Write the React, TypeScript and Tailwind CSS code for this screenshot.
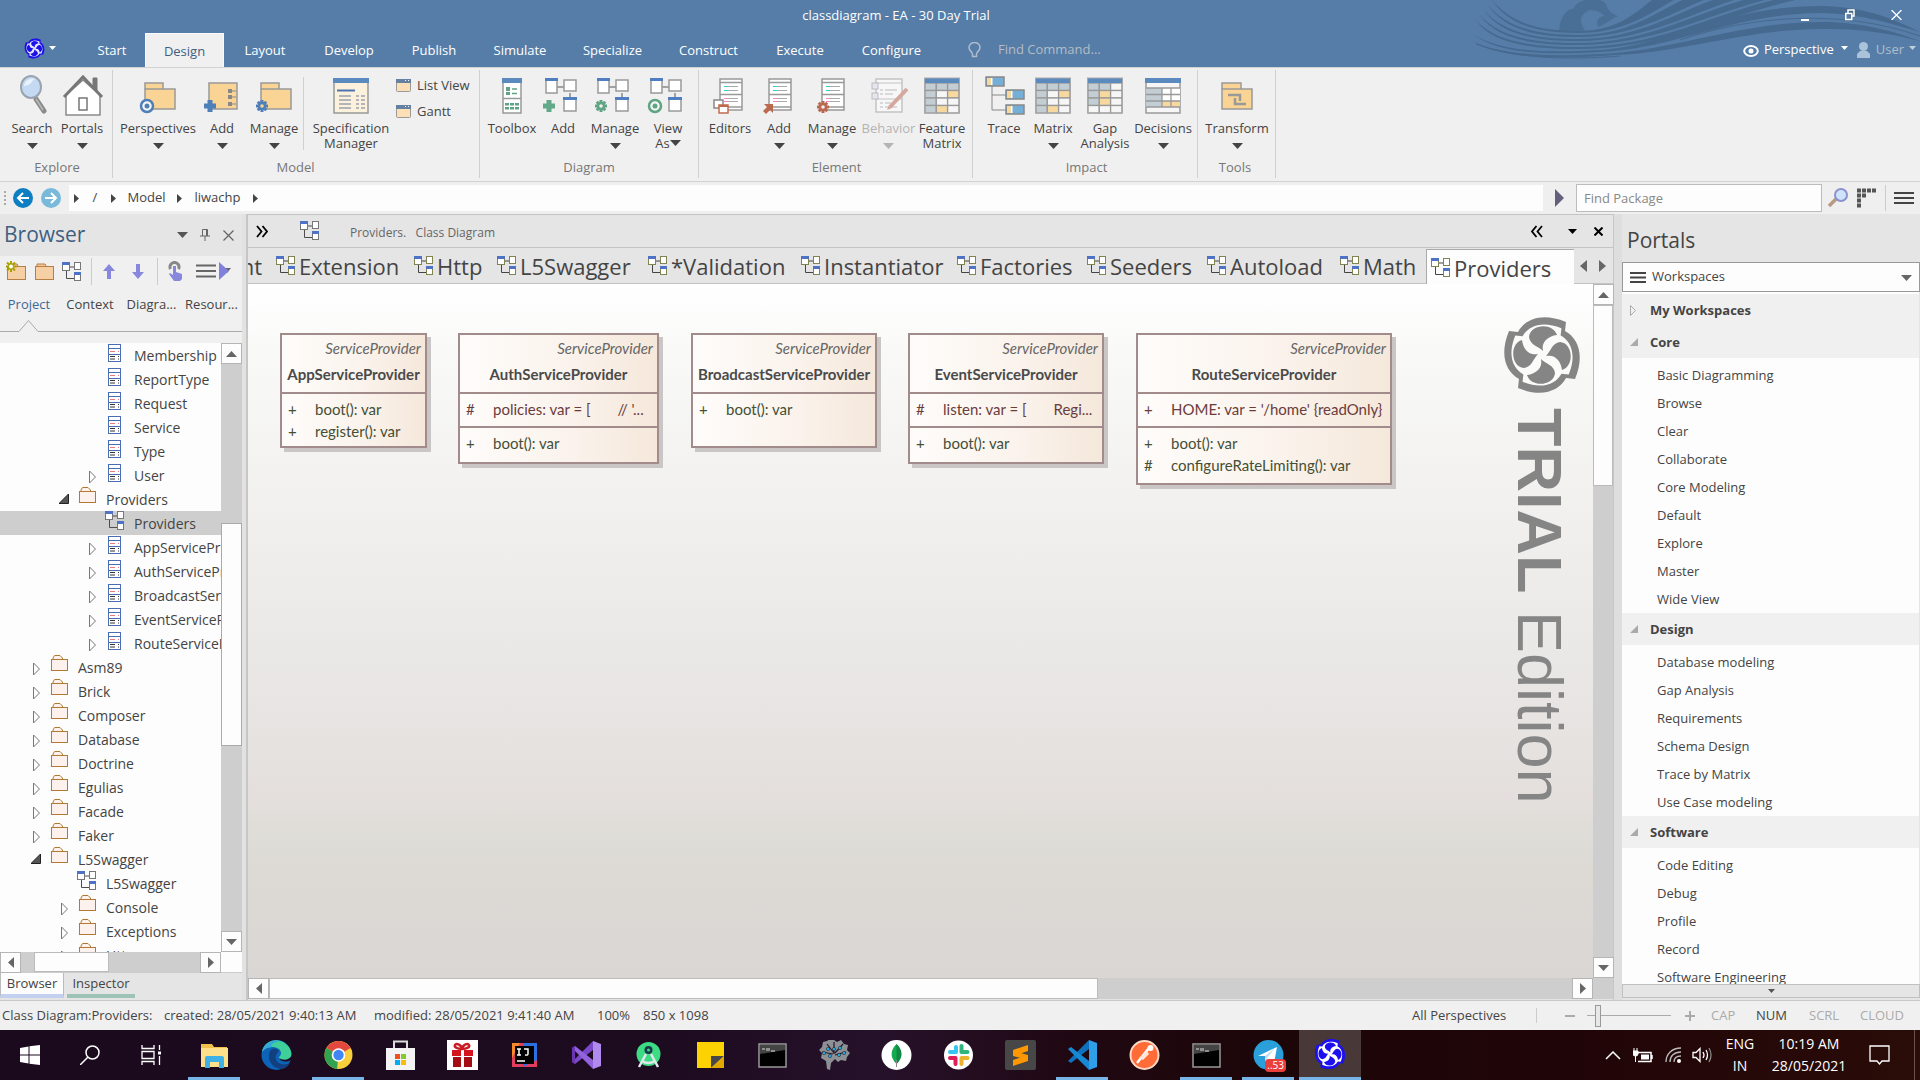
import React from "react";

const UI = "font-['Open_Sans','Noto_Sans',sans-serif]";

/* ---------- Logo ---------- */

function EaLogo({ size, color, bg }: { size: number; color: string; bg: string }) {
  const ring =
    "M24 -33 L23 -24 C36 -17 43 0 33 24 L24 23 C17 36 0 43 -24 33 L-23 24 C-36 17 -43 0 -33 -24 L-24 -23 C-17 -36 0 -43 24 -33Z";
  const blob = "M1 -4 C-4 -9 -12 -10 -13 -18 C-12 -31 11 -33 15 -20 C6 -19 -1 -13 1 -4Z";
  return (
    <svg width={size} height={size} viewBox="-40 -40 80 80" aria-hidden="true">
      <path d={ring} fill={color} />
      <path d={ring} fill={bg} transform="scale(.81)" />
      {[0, 90, 180, 270].map((a) => (
        <path key={a} d={blob} fill={color} transform={`rotate(${a})`} />
      ))}
    </svg>
  );
}

/* ---------- Small shapes ---------- */

function Tri({ dir, w = 10, h = 6, color = "#444" }: { dir: "up" | "down" | "left" | "right"; w?: number; h?: number; color?: string }) {
  const pts = {
    up: `0,${h} ${w},${h} ${w / 2},0`,
    down: `0,0 ${w},0 ${w / 2},${h}`,
    left: `${w},0 ${w},${h} 0,${h / 2}`,
    right: `0,0 0,${h} ${w},${h / 2}`,
  }[dir];
  return (
    <svg width={w} height={h} viewBox={`0 0 ${w} ${h}`} className="shrink-0" aria-hidden="true">
      <polygon points={pts} fill={color} />
    </svg>
  );
}

function DiagramIcon({ line = "#777", dark = "#4d4d4d" }: { line?: string; dark?: string }) {
  return (
    <svg width="20" height="19" viewBox="0 0 20 19" className="shrink-0" aria-hidden="true">
      <path d="M8 5h4M4.500 9v7.500h8" stroke={dark} fill="none" />
      <rect x=".5" y=".5" width="7" height="8" fill="#fff" stroke={line} />
      <rect x="0" y="0" width="8" height="3" fill="#4f73c4" />
      <rect x="12.500" y=".5" width="6" height="7" fill="#fff" stroke={line} />
      <rect x="12.500" y="10.500" width="6" height="8" fill="#fff" stroke={line} />
      <rect x="12" y="10" width="7" height="3" fill="#4f73c4" />
    </svg>
  );
}

function ClassIcon() {
  return (
    <svg width="14" height="18" viewBox="0 0 14 18" className="shrink-0" aria-hidden="true">
      <rect x=".5" y=".5" width="12" height="17" fill="#fff" stroke="#4a6db5" />
      <path d="M0 4.500h13M0 10.500h13" stroke="#4a6db5" />
      <path d="M2 7.500h5M10 7.500h1" stroke="#e77" />
      <path d="M2 12.500h5M10 12.500h1M2 15h5M10 15h1" stroke="#333" />
    </svg>
  );
}

function FolderIcon() {
  return (
    <svg width="18" height="16" viewBox="0 0 18 16" className="shrink-0" aria-hidden="true">
      <path d="M2 4.500V3l1.500-2.500H9L11.500 3v1.500" fill="#fdf1ee" stroke="#b07a35" />
      <rect x=".5" y="4.500" width="16" height="11" fill="#fdf1ee" stroke="#b07a35" />
    </svg>
  );
}

function FilledFolder({ star = false }: { star?: boolean }) {
  return (
    <svg width="21" height="20" viewBox="0 0 21 20" aria-hidden="true">
      <path d="M3 5V3h8l1 2" fill="#f6c99a" stroke="#b57f45" />
      <rect x="1.500" y="5.500" width="18" height="13" fill="#f6cfa4" stroke="#b57f45" />
      {star && (
        <g>
          <path d="M5 0v11M-.5 5.500h11M1 1.500l8 8M9 1.500l-8 8" stroke="#a9a000" strokeWidth="2" />
          <circle cx="5" cy="5.500" r="2" fill="#fff" />
        </g>
      )}
    </svg>
  );
}

/* ---------- Ribbon icons ---------- */

const G = "#999";
const gear = (cx: number, cy: number, color: string, hole = "#f0f0f0") => (
  <g>
    {[0, 45, 90, 135].map((a) => (
      <rect key={a} x={cx - 1.5} y={cy - 6} width="3" height="12" fill={color} transform={`rotate(${a} ${cx} ${cy})`} />
    ))}
    <circle cx={cx} cy={cy} r="4" fill={color} />
    <circle cx={cx} cy={cy} r="1.800" fill={hole} />
  </g>
);
const plus = (cx: number, cy: number, color: string) => (
  <path d={`M${cx - 6} ${cy}h12M${cx} ${cy - 6}v12`} stroke={color} strokeWidth="5" />
);
const eye = (cx: number, cy: number, color: string) => (
  <g>
    <circle cx={cx} cy={cy} r="6" fill="#f6f6f6" stroke={color} strokeWidth="2.500" />
    <circle cx={cx} cy={cy} r="2.500" fill={color} />
  </g>
);
const folderShape = (
  <g stroke={G} strokeWidth="1.500" fill="#f9d494">
    <path d="M6 12V6h18v6" />
    <rect x="6" y="12" width="30" height="20" />
  </g>
);
const diagShape = (
  <g>
    <path d="M13 10h8M26 16v8" stroke="#888" strokeWidth="1.500" />
    <rect x="2" y="2" width="11" height="14" fill="#fff" stroke={G} strokeWidth="1.500" />
    <rect x="1" y="1" width="13" height="3" fill="#4f7fc0" />
    <rect x="20" y="3" width="12" height="11" fill="#fff" stroke={G} strokeWidth="1.500" />
    <rect x="20" y="21" width="12" height="13" fill="#fff" stroke={G} strokeWidth="1.500" />
    <rect x="19" y="20" width="14" height="3" fill="#4f7fc0" />
  </g>
);
const docShape = (
  <g>
    <rect x="9" y="2" width="22" height="31" fill="#fff" stroke={G} strokeWidth="1.500" />
    <path d="M9 5.500h22M9 17.500h22M9 30h22" stroke={G} strokeWidth="1.500" />
    <path d="M13 9.500h14M13 13.500h14M13 21.500h14M13 24.500h14" stroke="#aaa" />
    <path d="M13 9.500h4M13 13.500h4" stroke="#3cc" />
    <path d="M13 21.500h4M13 24.500h4" stroke="#e8c" />
  </g>
);
function grid(cells: string[]) {
  const fills: Record<string, string> = { b: "#c3ced4", y: "#f7d9a0", w: "#f6f6f6" };
  return (
    <g>
      {cells.map((row, r) =>
        row.split("").map((c, k) => (
          <rect key={`${r}${k}`} x={2 + k * 11.3} y={6 + r * 7.5} width="11.300" height="7.500" fill={fills[c]} stroke={G} strokeWidth="1.300" />
        )),
      )}
      <rect x="1.500" y="1" width="35" height="5" fill="#5b8abf" />
      <rect x="1.500" y="1" width="35" height="35" fill="none" stroke="#aaa" />
    </g>
  );
}
const traceBox = (x: number, y: number) => (
  <g>
    <rect x={x} y={y} width="18" height="9" fill="#75aed6" stroke="#888" strokeWidth="1.500" />
    <rect x={x + 1} y={y + 1} width="4" height="7" fill="#f7d9a0" />
    <rect x={x + 5} y={y + 1} width="1.500" height="7" fill="#fff" />
  </g>
);

const ribbonIcons: Record<string, React.ReactNode> = {
  search: (
    <g>
      <path d="M23 22l8 12" stroke="#8a8a8a" strokeWidth="5" strokeLinecap="round" />
      <path d="M23 22l7 11" stroke="#bbb" strokeWidth="1.500" />
      <ellipse cx="18" cy="10" rx="10" ry="11" fill="#c4daf2" stroke="#9aa3b0" strokeWidth="2" />
      <path d="M11 9c1-6 6-8 11-7-4 2-3 6-11 7z" fill="#eaf3fc" />
    </g>
  ),
  portals: (
    <g>
      <path d="M30 11V1h4v14" fill="#777" stroke="#777" />
      <path d="M3 18v20h34V18L20 3z" fill="#fff" stroke="#8a8a8a" strokeWidth="1.500" />
      <path d="M1 20L20 0 39 20" fill="none" stroke="#777" strokeWidth="3" />
      <rect x="16" y="21" width="8" height="12" fill="#fff" stroke="#777" strokeWidth="1.500" />
    </g>
  ),
  perspectives: <g>{folderShape}{eye(8, 29, "#4f7fb8")}</g>,
  addModel: (
    <g>
      <rect x="6" y="6" width="28" height="26" fill="#f9d494" stroke={G} strokeWidth="1.500" />
      <path d="M27 14h6M27 20h6M27 27h6" stroke="#888" />
      <path d="M27 12v4M27 18v4M27 25v4" stroke="#888" strokeWidth="4" />
      {plus(7, 29, "#4f7fb8")}
    </g>
  ),
  manageModel: <g>{folderShape}{gear(7, 29, "#4f7fb8", "#f9d494")}</g>,
  spec: (
    <g>
      <rect x="2" y="2" width="34" height="34" fill="#fcf1dc" stroke={G} strokeWidth="1.500" />
      <rect x="1" y="1" width="36" height="5" fill="#5b8abf" />
      <path d="M5 13.500h18" stroke="#4f73b0" strokeWidth="2" />
      <path d="M7 19h12M7 23h12M7 27h12M7 31h12M24 19h3M29 19h4M24 23h3M29 23h4M24 27h3M29 27h4M24 31h3M29 31h4" stroke="#6a7a95" />
    </g>
  ),
  toolbox: (
    <g>
      <rect x="10" y="2" width="18" height="34" fill="#fff" stroke={G} strokeWidth="1.500" />
      <rect x="9" y="1" width="20" height="5" fill="#5b8abf" />
      <path d="M10 21.500h18" stroke={G} strokeWidth="1.500" />
      <path d="M13 10h4v4h-4zM13 15h4v3h-4zM12 26h4v2.500h-4zM17 26h4v2.500h-4zM22 26h4v2.500h-4zM12 30h4v2.500h-4zM17 30h4v2.500h-4zM22 30h4v2.500h-4z" fill="#5fa583" />
      <path d="M19 12h5M19 16.500h5" stroke="#5fa583" strokeWidth="1.500" />
    </g>
  ),
  addDiagram: <g>{diagShape}{plus(5, 29, "#62a98a")}</g>,
  manageDiagram: <g>{diagShape}{gear(5, 29, "#5fa583")}</g>,
  viewAs: <g>{diagShape}{eye(6, 29, "#5fa583")}</g>,
  editors: (
    <g>
      {docShape}
      <rect x="3" y="23" width="9" height="8" fill="#fff" stroke="#888" strokeWidth="1.500" />
      <rect x="8" y="28" width="9" height="8" fill="#fff" stroke="#c2694c" strokeWidth="1.500" />
      <path d="M8 29h9" stroke="#c2694c" strokeWidth="2" />
    </g>
  ),
  addElement: <g>{docShape}<path d="M13 27v9l-3-3-4 4-3-3 4-4-3-3z" fill="#bb6a50" /></g>,
  manageElement: <g>{docShape}{gear(10, 30, "#b9694f")}</g>,
  behavior: (
    <g opacity=".5">
      <rect x="6" y="2" width="26" height="33" fill="#fff" stroke={G} strokeWidth="1.500" />
      <path d="M6 6h26M6 22h26" stroke={G} />
      <path d="M10 13h3M15 13h12M10 17h3M15 17h8M10 26h3M15 26h6M10 30h3M15 30h12" stroke="#888" />
      <rect x="2" y="6" width="6" height="6" fill="#dde" stroke="#889" />
      <rect x="2" y="16" width="6" height="6" fill="#dde" stroke="#889" />
      <path d="M20 30L37 12" stroke="#b9634d" strokeWidth="4" />
      <path d="M17 33l2-5 3 3z" fill="#b9634d" />
    </g>
  ),
  featureMatrix: grid(["bbb", "bwy", "bww", "byw"]),
  matrix: grid(["bbb", "bwy", "bww", "byw"]),
  gap: grid(["bbw", "byw", "byw", "www"]),
  decisions: (
    <g>
      <rect x="2" y="2" width="34" height="34" fill="#f6f6f6" stroke={G} strokeWidth="1.500" />
      <rect x="1" y="1" width="36" height="5" fill="#5b8abf" />
      <rect x="2" y="11" width="16" height="19" fill="#c3ced4" />
      <rect x="18" y="11" width="18" height="13" fill="#fff" />
      <rect x="18" y="24" width="18" height="6" fill="#f7d9a0" />
      <path d="M2 11h34M2 17.500h34M2 24h34M2 30h34M18 11v19M27 11v19" stroke={G} strokeWidth="1.300" />
    </g>
  ),
  trace: (
    <g>
      <path d="M7 9v24h14M7 18h14" fill="none" stroke="#888" />
      {traceBox(1, 0)}
      {traceBox(21, 13)}
      {traceBox(21, 28)}
    </g>
  ),
  transform: (
    <g>
      <path d="M4 12V6h19v6" fill="#f9d494" stroke={G} strokeWidth="1.500" />
      <rect x="4" y="12" width="30" height="20" fill="#f9d494" stroke={G} strokeWidth="1.500" />
      <path d="M10 18h12v6M28 27H17v-6" fill="none" stroke="#999" strokeWidth="2.500" />
    </g>
  ),
};

type RB = { icon: string; label: string[]; w: string; arrow?: boolean; inlineArrow?: boolean; off?: boolean };

function RibbonButton({ b }: { b: RB }) {
  return (
    <button className={`${b.w} flex shrink-0 flex-col items-center text-[13px] leading-[15px] ${b.off ? "text-[#b4b4b4]" : "text-[#444]"}`}>
      <span className="flex h-[53px] items-center pl-[2px] pt-1">
        <svg width="40" height="40" viewBox="0 0 40 40" aria-hidden="true" className="overflow-visible">
          {ribbonIcons[b.icon]}
        </svg>
      </span>
      <span className="whitespace-nowrap">{b.label[0]}</span>
      {b.label[1] && (
        <span className="flex whitespace-nowrap">
          {b.label[1]}
          {b.inlineArrow && (
            <span className="pt-1">
              <Tri dir="down" w={11} h={6} />
            </span>
          )}
        </span>
      )}
      {b.arrow && (
        <span className="mt-[7px]">
          <Tri dir="down" w={11} h={6} color={b.off ? "#b4b4b4" : "#444"} />
        </span>
      )}
    </button>
  );
}

function Group({ label, cls, items, children }: { label: string; cls: string; items: RB[]; children?: React.ReactNode }) {
  return (
    <section className={`${cls} relative flex shrink-0 flex-col`}>
      <div className="flex h-[91px]">
        {items.map((b, i) => (
          <RibbonButton key={i} b={b} />
        ))}
        {children}
      </div>
      <h2 className="pr-[6px] text-center text-[13px] leading-4 text-[#777]">{label}</h2>
      <div className="absolute right-0 top-[2px] h-[108px] w-px bg-[#d0d0d0]" />
    </section>
  );
}

function WindowIcon() {
  return (
    <svg width="15" height="13" viewBox="0 0 15 13" aria-hidden="true">
      <rect x=".5" y=".5" width="14" height="12" rx="1" fill="#fcdfb6" stroke="#999" />
      <rect x="0" y="0" width="15" height="4" fill="#6580a0" />
      <path d="M9 1.500h1M12 1.500h1" stroke="#fff" />
    </svg>
  );
}

function Ribbon() {
  return (
    <div className="flex h-[115px] shrink-0 border-y border-[#d2d2d2] bg-[#f0f0f0]">
      <Group
        label="Explore"
        cls="w-[113px] pl-[7px]"
        items={[
          { icon: "search", label: ["Search"], w: "w-[50px]", arrow: true },
          { icon: "portals", label: ["Portals"], w: "w-[50px]", arrow: true },
        ]}
      />
      <Group
        label="Model"
        cls="w-[367px] pl-1"
        items={[
          { icon: "perspectives", label: ["Perspectives"], w: "w-[82px]", arrow: true },
          { icon: "addModel", label: ["Add"], w: "w-[46px]", arrow: true },
          { icon: "manageModel", label: ["Manage"], w: "w-[58px]", arrow: true },
        ]}
      >
        <div className="mt-[9px] mr-1 h-[73px] w-px shrink-0 bg-[#d0d0d0]" />
        <RibbonButton b={{ icon: "spec", label: ["Specification", "Manager"], w: "w-[86px]" }} />
        <div className="flex flex-col gap-[10px] pl-[2px] pt-[9px] text-[13px] leading-4 text-[#444]">
          <button className="flex items-center gap-[6px] whitespace-nowrap"><WindowIcon />List View</button>
          <button className="flex items-center gap-[6px]"><WindowIcon />Gantt</button>
        </div>
      </Group>
      <Group
        label="Diagram"
        cls="w-[219px] pl-[5px]"
        items={[
          { icon: "toolbox", label: ["Toolbox"], w: "w-[54px]" },
          { icon: "addDiagram", label: ["Add"], w: "w-[48px]" },
          { icon: "manageDiagram", label: ["Manage"], w: "w-[56px]", arrow: true },
          { icon: "viewAs", label: ["View", "As"], w: "w-[50px]", inlineArrow: true },
        ]}
      />
      <Group
        label="Element"
        cls="w-[274px] pl-[7px]"
        items={[
          { icon: "editors", label: ["Editors"], w: "w-[48px]" },
          { icon: "addElement", label: ["Add"], w: "w-[50px]", arrow: true },
          { icon: "manageElement", label: ["Manage"], w: "w-[56px]", arrow: true },
          { icon: "behavior", label: ["Behavior"], w: "w-[57px]", arrow: true, off: true },
          { icon: "featureMatrix", label: ["Feature", "Matrix"], w: "w-[50px]" },
        ]}
      />
      <Group
        label="Impact"
        cls="w-[225px] pl-2"
        items={[
          { icon: "trace", label: ["Trace"], w: "w-[46px]" },
          { icon: "matrix", label: ["Matrix"], w: "w-[52px]", arrow: true },
          { icon: "gap", label: ["Gap", "Analysis"], w: "w-[52px]" },
          { icon: "decisions", label: ["Decisions"], w: "w-[64px]", arrow: true },
        ]}
      />
      <Group label="Tools" cls="w-[78px] pl-[2px]" items={[{ icon: "transform", label: ["Transform"], w: "w-[74px]", arrow: true }]} />
    </div>
  );
}

/* ---------- Title bar ---------- */

const menu: [string, string][] = [
  ["Start", "w-[66px]"],
  ["Design", "w-[79px]"],
  ["Layout", "w-[82px]"],
  ["Develop", "w-[86px]"],
  ["Publish", "w-[84px]"],
  ["Simulate", "w-[88px]"],
  ["Specialize", "w-[97px]"],
  ["Construct", "w-[95px]"],
  ["Execute", "w-[88px]"],
  ["Configure", "w-[95px]"],
];

function Swirl() {
  /* Ribbons that leave the left edge as thin lines and widen towards the upper right. */
  const ribbons = [0, 1, 2, 3, 4].map((i) => {
    const x = 52 - i * 4;
    const y = i * 5;
    const low = 31 + i * 4;
    const end = 215 + i * 32;
    return `M${x} ${y}C${x + 20} ${y + 24} 100 ${low} 138 ${low}C${180 + i * 10} ${low} ${195 + i * 20} 12 ${end} -2H${end + 22}C${212 + i * 20} 12 ${186 + i * 10} ${low + 2} 138 ${low + 2}C100 ${low + 2} ${x + 17} ${y + 26} ${x} ${y}Z`;
  });
  return (
    <svg width="450" height="60" viewBox="30 0 450 60" className="absolute right-0 top-0" aria-hidden="true">
      <g fill="#46698f">
        <path d="M119 31C120 16 127 9 133 9C139 -3 160 -4 166 4C168 12 173 14 178 16C172 19 165 24 158 27C155 20 160 16 165 16C158 10 150 8 146 12C139 16 140 25 145 30C138 32 128 32 119 31Z" opacity=".7" />
        {ribbons.map((d) => (
          <path key={d} d={d} />
        ))}
        <path d="M33 34C60 52 105 53 160 50C230 45 285 5 385 6C430 8 455 20 480 32C455 25 425 14 380 13C290 14 235 49 160 52C105 55 58 54 33 34Z" />
        <path d="M32 41C65 57 120 57 175 53C245 47 310 20 390 22C430 24 455 32 480 41C455 35 430 29 385 29C310 28 245 52 175 55C120 59 63 60 32 41Z" />
      </g>
      <path d="M36 44C75 59 130 60 180 56M240 40C310 16 400 8 480 36" fill="none" stroke="#46698f" />
    </svg>
  );
}

function TitleBar() {
  return (
    <header className="relative flex h-[67px] shrink-0 flex-col bg-[#567da7] text-[13px] text-white">
      <Swirl />
      <div className="relative flex h-[33px] items-center justify-end">
        <h1 className="absolute inset-x-0 top-0 pr-[128px] text-center leading-[30px]">classdiagram - EA - 30 Day Trial</h1>
        <div className="relative flex items-center gap-[36px] pb-1 pr-[18px]">
          <button aria-label="Minimize" className="flex h-3 w-2 items-end"><span className="h-[2px] w-2 bg-white" /></button>
          <button aria-label="Restore">
            <svg width="10" height="12" viewBox="0 0 10 12"><path d="M3 4V1h6v6H7M.75 4.500h6v6h-6z" fill="none" stroke="#fff" strokeWidth="1.500" /></svg>
          </button>
          <button aria-label="Close">
            <svg width="11" height="10" viewBox="0 0 11 10"><path d="M.5 0l10 10M10.500 0l-10 10" stroke="#fff" strokeWidth="1.300" /></svg>
          </button>
        </div>
      </div>
      <nav className="relative flex h-[34px] items-center">
        <button aria-label="Application menu" className="flex w-[79px] items-center gap-1 pb-1 pl-6">
          <EaLogo size={21} color="#1c10e8" bg="#e4e6ff" />
          <Tri dir="down" w={7} h={4} color="#fff" />
        </button>
        {menu.map(([m, w]) => (
          <button
            key={m}
            className={`${w} h-full shrink-0 ${m === "Design" ? "border border-b-0 border-[#fafafa] bg-[#f0f0f0] leading-[32px] text-[#3f5f80]" : "leading-[34px]"}`}
          >
            {m}
          </button>
        ))}
        <label htmlFor="find-command" className="pl-[29px] pr-[17px]">
          <svg width="13" height="17" viewBox="0 0 13 17" role="img" aria-label="Find Command">
            <path d="M4.500 12C4 9 1 9 1 5.500a5.500 5 0 0 1 11 0C12 9 9 9 8.500 12v2.500h-4z" fill="none" stroke="#aebccc" strokeWidth="1.500" />
          </svg>
        </label>
        <input id="find-command" placeholder="Find Command..." className="w-40 bg-transparent placeholder:text-[#b4bcc6]" />
        <div className="flex flex-1 items-center justify-end">
          <button className="flex items-center">
            <svg width="16" height="12" viewBox="0 0 16 12" className="mr-[5px] mt-[2px]" aria-hidden="true">
              <ellipse cx="8" cy="6" rx="6.800" ry="5" fill="none" stroke="#fff" strokeWidth="2" />
              <circle cx="8" cy="6" r="2.500" fill="#fff" />
            </svg>
            Perspective
            <span className="ml-[7px] pb-1"><Tri dir="down" w={7} h={4} color="#fff" /></span>
          </button>
          <button className="ml-[9px] mr-1 flex items-center text-[#aebdcd]">
            <svg width="13" height="16" viewBox="0 0 13 16" className="mr-[6px]" aria-hidden="true">
              <circle cx="6.500" cy="4.500" r="4.500" fill="#aac2da" />
              <path d="M0 16v-4l3-3h7l3 3v4z" fill="#aac2da" />
            </svg>
            User
            <span className="ml-[5px] pb-1"><Tri dir="down" w={7} h={4} color="#c3cfdc" /></span>
          </button>
        </div>
      </nav>
    </header>
  );
}

/* ---------- Address bar ---------- */

function RoundArrow({ color, flip, label }: { color: string; flip?: boolean; label: string }) {
  return (
    <button aria-label={label}>
      <svg width="20" height="20" viewBox="0 0 20 20">
        <circle cx="10" cy="10" r="10" fill={color} />
        <path d={flip ? "M4 10h11M10 5l5 5-5 5" : "M16 10H5M10 5l-5 5 5 5"} fill="none" stroke="#fff" strokeWidth="2" />
      </svg>
    </button>
  );
}

function AddressBar() {
  return (
    <div className="flex h-8 shrink-0 items-center bg-[#efefef] text-[13px] text-[#444]">
      <div className="ml-1 mr-[7px] h-[14px] w-px border-l-2 border-dotted border-[#aaa]" />
      <RoundArrow color="#0f7fc4" label="Back" />
      <span className="w-2" />
      <RoundArrow color="#79b9da" flip label="Forward" />
      <nav className="ml-2 flex h-[26px] flex-1 items-center bg-[#fdfdfd] pl-[5px]">
        <Tri dir="right" w={5} h={9} />
        <a href="#root" className="w-8 text-center">/</a>
        <Tri dir="right" w={5} h={9} />
        <a href="#model" className="w-[61px] text-center">Model</a>
        <Tri dir="right" w={5} h={9} />
        <a href="#liwachp" className="w-[71px] text-center">liwachp</a>
        <Tri dir="right" w={5} h={9} />
      </nav>
      <button aria-label="Go" className="px-3"><Tri dir="right" w={9} h={18} color="#64607c" /></button>
      <input aria-label="Find Package" placeholder="Find Package" className="h-7 w-[246px] border border-[#bcbcbc] bg-[#fdfdfd] px-[7px] placeholder:text-[#888]" />
      <button aria-label="Search package" className="ml-[6px]">
        <svg width="20" height="20" viewBox="0 0 20 20">
          <path d="M1 18l7-7" stroke="#b79a80" strokeWidth="3.500" />
          <circle cx="13" cy="7" r="6" fill="#cfe4fb" stroke="#8b90cf" strokeWidth="2" />
        </svg>
      </button>
      <button aria-label="Layout" className="ml-[9px]">
        <svg width="20" height="20" viewBox="0 0 20 20">
          <path d="M0 2.500h20" stroke="#555" strokeWidth="4" strokeDasharray="4 1" />
          <path d="M0 7.500h10M0 12.500h4M0 17.500h4" stroke="#555" strokeWidth="4" strokeDasharray="4 1" />
        </svg>
      </button>
      <div className="mx-2 h-[26px] w-px bg-[#ccc]" />
      <button aria-label="Menu" className="mr-[6px] flex w-5 flex-col gap-[3px]">
        <span className="h-[2px] bg-[#444]" />
        <span className="h-[2px] bg-[#444]" />
        <span className="h-[2px] bg-[#444]" />
      </button>
    </div>
  );
}

/* ---------- Scroll bars ---------- */

function ScrollBtn({ dir }: { dir: "up" | "down" | "left" | "right" }) {
  const v = dir === "up" || dir === "down";
  return (
    <button aria-label={`Scroll ${dir}`} className="flex h-[21px] w-[21px] shrink-0 items-center justify-center border border-[#b5b5b5] bg-[#fdfdfd]">
      <Tri dir={dir} w={v ? 11 : 6} h={v ? 6 : 11} color="#666" />
    </button>
  );
}

/* ---------- Browser panel ---------- */

type Row = { t: string; d: number; k: "class" | "folder" | "diagram"; e?: "open" | "closed"; sel?: boolean };
const rows: Row[] = [
  { t: "Membership", d: 2, k: "class" },
  { t: "ReportType", d: 2, k: "class" },
  { t: "Request", d: 2, k: "class" },
  { t: "Service", d: 2, k: "class" },
  { t: "Type", d: 2, k: "class" },
  { t: "User", d: 2, k: "class", e: "closed" },
  { t: "Providers", d: 1, k: "folder", e: "open" },
  { t: "Providers", d: 2, k: "diagram", sel: true },
  { t: "AppServiceProvider", d: 2, k: "class", e: "closed" },
  { t: "AuthServiceProvider", d: 2, k: "class", e: "closed" },
  { t: "BroadcastServiceProvider", d: 2, k: "class", e: "closed" },
  { t: "EventServiceProvider", d: 2, k: "class", e: "closed" },
  { t: "RouteServiceProvider", d: 2, k: "class", e: "closed" },
  { t: "Asm89", d: 0, k: "folder", e: "closed" },
  { t: "Brick", d: 0, k: "folder", e: "closed" },
  { t: "Composer", d: 0, k: "folder", e: "closed" },
  { t: "Database", d: 0, k: "folder", e: "closed" },
  { t: "Doctrine", d: 0, k: "folder", e: "closed" },
  { t: "Egulias", d: 0, k: "folder", e: "closed" },
  { t: "Facade", d: 0, k: "folder", e: "closed" },
  { t: "Faker", d: 0, k: "folder", e: "closed" },
  { t: "L5Swagger", d: 0, k: "folder", e: "open" },
  { t: "L5Swagger", d: 1, k: "diagram" },
  { t: "Console", d: 1, k: "folder", e: "closed" },
  { t: "Exceptions", d: 1, k: "folder", e: "closed" },
  { t: "Http", d: 1, k: "folder", e: "closed" },
];
const indent = ["pl-[31px]", "pl-[59px]", "pl-[87px]"];

function TreeRow({ r }: { r: Row }) {
  return (
    <li className={r.sel ? "bg-[#cecece]" : ""}>
      <button className={`flex h-6 w-full whitespace-nowrap ${indent[r.d]}`}>
        <span className="flex w-5 shrink-0 pt-[7px]">
          {r.e === "closed" && (
            <svg width="10" height="14" viewBox="0 0 10 14" className="ml-[2px]"><path d="M.5 1v12l6-6z" fill="none" stroke="#777" /></svg>
          )}
          {r.e === "open" && (
            <svg width="10" height="10" viewBox="0 0 10 10"><path d="M9.500 0v9.500H0z" fill="#555" stroke="#222" /></svg>
          )}
        </span>
        <span className={`shrink-0 ${r.k === "class" ? "w-[27px] pl-[1px] pt-[1px]" : r.k === "diagram" ? "-ml-[2px] w-[29px]" : "w-[27px]"}`}>
          {r.k === "class" ? <ClassIcon /> : r.k === "folder" ? <FolderIcon /> : <DiagramIcon />}
        </span>
        <span className="text-sm leading-[26px]">{r.t}</span>
      </button>
    </li>
  );
}

function BrowserPanel() {
  return (
    <aside className="flex w-[242px] shrink-0 flex-col bg-[#e5e5e5] text-[#444]">
      <div className="flex h-[42px] shrink-0 items-center">
        <h2 className="flex-1 pl-1 text-[21px] text-[#3f5f80]">Browser</h2>
        <button aria-label="Options" className="mr-[12px]"><Tri dir="down" w={11} h={6} color="#555" /></button>
        <button aria-label="Pin" className="mr-[13px]">
          <svg width="10" height="12" viewBox="0 0 10 12"><path d="M2.500 7V.5h5V7M6.500 1v6M0 7h10M5 7v5" fill="none" stroke="#666" /></svg>
        </button>
        <button aria-label="Close" className="mr-2">
          <svg width="11" height="11" viewBox="0 0 11 11"><path d="M.5.5l10 10M10.500.5l-10 10" stroke="#666" strokeWidth="1.300" /></svg>
        </button>
      </div>
      <div className="flex h-[30px] shrink-0 items-center bg-[#f0f0f0] pl-[6px]">
        <button aria-label="New package" className="w-7"><FilledFolder star /></button>
        <button aria-label="New folder" className="w-[28px]"><FilledFolder /></button>
        <button aria-label="New diagram" className="w-[29px]"><DiagramIcon /></button>
        <div className="h-[27px] w-px bg-[#ccc]" />
        <button aria-label="Move up" className="ml-[11px] w-[29px]">
          <svg width="12" height="15" viewBox="0 0 12 15"><path d="M6 0l6 7H8v8H4V7H0z" fill="#8787dd" /></svg>
        </button>
        <button aria-label="Move down" className="w-[25px]">
          <svg width="12" height="15" viewBox="0 0 12 15"><path d="M6 15l6-7H8V0H4v8H0z" fill="#8787dd" /></svg>
        </button>
        <div className="h-[27px] w-px bg-[#ccc]" />
        <button aria-label="Touch" className="ml-[10px] w-7">
          <svg width="16" height="20" viewBox="0 0 16 20">
            <path d="M2.500 8a4.500 4.500 0 1 1 8 0" fill="none" stroke="#888" strokeWidth="3" />
            <path d="M5 5h3v6l6 2v5l-2 2H6l-5-7 1-1 3 2z" fill="#8787dd" />
          </svg>
        </button>
        <button aria-label="Options menu" className="flex items-center gap-[3px]">
          <svg width="20" height="14" viewBox="0 0 20 14"><path d="M0 1.500h20M0 7h20M0 12.500h20" stroke="#666" strokeWidth="2" /></svg>
          <svg width="12" height="18" viewBox="0 0 12 18"><path d="M5 6h7l-4 5z" fill="#666" /><path d="M0 0v18l10-9z" fill="#8080dd" /></svg>
        </button>
      </div>
      <div className="flex h-[37px] shrink-0 items-center bg-[#f0f0f0] text-[13px]" role="tablist">
        <button role="tab" className="w-[58px] text-[#3f6795]">Project</button>
        <button role="tab" className="w-[64px]">Context</button>
        <button role="tab" className="w-[59px]">Diagra...</button>
        <button role="tab" className="w-[61px]">Resour...</button>
      </div>
      <div className="flex h-5 shrink-0 items-start bg-[#f0f0f0]">
        <div className="mt-2 h-px w-[19px] bg-[#aaa]" />
        <svg width="19" height="9" viewBox="0 0 19 9" aria-hidden="true" className="overflow-visible"><path d="M0 8.500L9.500 -2.500 19 8.500" fill="none" stroke="#aaa" /></svg>
        <div className="mt-2 h-px flex-1 bg-[#aaa]" />
      </div>
      <div className="flex min-h-0 flex-1">
        <ul className="flex-1 overflow-hidden bg-[#fdfdfd]">
          {rows.map((r, i) => (
            <TreeRow key={i} r={r} />
          ))}
        </ul>
        <div className="flex w-[21px] shrink-0 flex-col bg-[#cecece]">
          <ScrollBtn dir="up" />
          <div className="flex-[160]" />
          <div className="flex-[221] border border-[#aaa] bg-[#fdfdfd]" />
          <div className="flex-[186]" />
          <ScrollBtn dir="down" />
        </div>
      </div>
      <div className="flex h-[21px] shrink-0 border-b border-[#ccc] bg-[#cecece]">
        <ScrollBtn dir="left" />
        <div className="ml-[13px] w-[75px] border border-[#bbb] bg-[#fdfdfd]" />
        <div className="flex-1" />
        <ScrollBtn dir="right" />
        <div className="w-[21px] bg-[#fdfdfd]" />
      </div>
      <div className="flex h-[27px] shrink-0 items-start text-[13px]">
        <button className="h-[25px] w-[64px] border border-t-0 border-[#bbb] border-b-[4px] border-b-[#c3d0f0] bg-[#fdfdfd] leading-[21px]">Browser</button>
        <button className="ml-[3px] h-[25px] w-[68px] border-b-4 border-[#9cc3b5] leading-[21px]">Inspector</button>
      </div>
    </aside>
  );
}

/* ---------- Diagram area ---------- */

const docTabs: [string, string][] = [
  ["Extension", "w-[138px]"],
  ["Http", "w-[83px]"],
  ["L5Swagger", "w-[151px]"],
  ["*Validation", "w-[153px]"],
  ["Instantiator", "w-[156px]"],
  ["Factories", "w-[130px]"],
  ["Seeders", "w-[120px]"],
  ["Autoload", "w-[133px]"],
  ["Math", "w-[86px]"],
];

type Box = { name: string; cls: string; attrs?: [string, string][]; ops: [string, string][] };
const boxes: Box[] = [
  { name: "AppServiceProvider", cls: "left-[32px] w-[147px] h-[115px]", ops: [["+", "boot(): var"], ["+", "register(): var"]] },
  { name: "AuthServiceProvider", cls: "left-[210px] w-[201px] h-[131px]", attrs: [["#", "policies: var = [       // '..."]], ops: [["+", "boot(): var"]] },
  { name: "BroadcastServiceProvider", cls: "left-[443px] w-[186px] h-[115px]", ops: [["+", "boot(): var"]] },
  { name: "EventServiceProvider", cls: "left-[660px] w-[196px] h-[131px]", attrs: [["#", "listen: var = [       Regi..."]], ops: [["+", "boot(): var"]] },
  { name: "RouteServiceProvider", cls: "left-[888px] w-[256px] h-[152px]", attrs: [["+", "HOME: var = '/home' {readOnly}"]], ops: [["+", "boot(): var"], ["#", "configureRateLimiting(): var"]] },
];

function ClassBox({ b }: { b: Box }) {
  const member = ([s, t]: [string, string]) => (
    <div key={t} className="flex">
      <span className="w-[27px] shrink-0">{s}</span>
      <span className="whitespace-pre">{t}</span>
    </div>
  );
  return (
    <article
      className={`absolute top-[49px] ${b.cls} flex flex-col border-2 border-[#a18b8b] bg-linear-to-r from-[#fefcfa] via-[#fbf4ee] to-[#f5e8db] font-['Lato','Noto_Sans',sans-serif] text-[15px] leading-[22px] text-[#4a4a4a] shadow-[4px_4px_0_#c9c6c5]`}
    >
      <div className="flex h-[59px] shrink-0 flex-col border-b-2 border-[#a18b8b]">
        <div className="px-1 pt-[2px] text-right italic text-[#666]">ServiceProvider</div>
        <div className="flex justify-center whitespace-nowrap pt-[4px] text-[15px] font-bold">{b.name}</div>
      </div>
      {b.attrs && <div className="h-[34px] shrink-0 border-b-2 border-[#a18b8b] pl-[6px] pt-1 text-[#6b3c3c]">{b.attrs.map(member)}</div>}
      <div className="pl-[6px] pt-1 text-[#454f34]">{b.ops.map(member)}</div>
    </article>
  );
}

function DiagramPanel() {
  return (
    <main className="flex min-w-0 flex-1 flex-col border-l-2 border-r border-[#c6c6c6] bg-[#e5e5e5]">
      <div className="flex h-[34px] shrink-0 items-center border-y border-[#c4c4c4]">
        <button aria-label="Expand" className="ml-2">
          <svg width="12" height="13" viewBox="0 0 12 13"><path d="M1 1l4.500 5.500L1 12M6.500 1l4.500 5.500L6.500 12" fill="none" stroke="#000" strokeWidth="1.800" /></svg>
        </button>
        <span className="ml-8 mt-[-2px]"><DiagramIcon /></span>
        <span className="ml-[30px] whitespace-pre pt-1 text-xs text-[#666]">Providers.   Class Diagram</span>
        <div className="flex-1" />
        <button aria-label="Collapse" className="mr-[25px]">
          <svg width="12" height="13" viewBox="0 0 12 13"><path d="M5.500 1L1 6.500 5.500 12M11 1L6.500 6.500 11 12" fill="none" stroke="#000" strokeWidth="1.800" /></svg>
        </button>
        <button aria-label="Tab list" className="mr-[17px]"><Tri dir="down" w={9} h={5} color="#000" /></button>
        <button aria-label="Close tab" className="mr-[10px]">
          <svg width="9" height="9" viewBox="0 0 9 9"><path d="M.5.5l8 8M8.500.5l-8 8" stroke="#000" strokeWidth="2" /></svg>
        </button>
      </div>
      <div className="flex h-9 shrink-0 border-b border-[#c4c4c4] text-[22px] leading-[37px] text-[#444]" role="tablist">
        <div className="flex w-[28px] shrink-0 justify-end overflow-hidden pr-[14px]">nt</div>
        {docTabs.map(([t, w]) => (
          <button role="tab" key={t} className={`${w} flex shrink-0 gap-[3px] whitespace-nowrap`}>
            <span className="mt-2 shrink-0"><DiagramIcon line="#7f8450" dark="#444" /></span>
            {t}
          </button>
        ))}
        <button role="tab" aria-selected="true" className="mb-[-1px] mt-[1px] flex flex-1 gap-[3px] border-l border-t border-[#aaa] bg-[#fdfdfd] pl-[4px]">
          <span className="mt-2 shrink-0"><DiagramIcon line="#7f8450" dark="#444" /></span>
          Providers
        </button>
        <button aria-label="Previous tabs" className="ml-[6px] mr-3"><Tri dir="left" w={7} h={12} color="#666" /></button>
        <button aria-label="Next tabs" className="mr-[7px]"><Tri dir="right" w={7} h={12} color="#666" /></button>
      </div>
      <div className="flex min-h-0 flex-1">
        <div className="relative flex-1 overflow-hidden bg-[linear-gradient(180deg,#ffffff_0%,#f9f9f8_10%,#f0efee_36%,#e9e7e6_56%,#e4dfdc_74%,#dddcd7_81%,#ddd9d5_86%,#dad6d3_100%)]">
          {boxes.map((b) => (
            <ClassBox key={b.name} b={b} />
          ))}
          <div className="absolute right-[11px] top-[31px] flex w-[80px] flex-col items-center text-[#858585]">
            <EaLogo size={80} color="#858585" bg="#fbfbfa" />
            <p className="mt-[13px] pr-1 font-['Liberation_Sans',Arial,sans-serif] text-[63px] leading-[76px] whitespace-nowrap [writing-mode:vertical-rl]">
              <b>TRIAL</b> Edition
            </p>
          </div>
        </div>
        <div className="flex w-5 shrink-0 flex-col bg-[#cecece]">
          <ScrollBtn dir="up" />
          <div className="flex-[180] border border-[#bbb] bg-[#fdfdfd]" />
          <div className="flex-[472]" />
          <ScrollBtn dir="down" />
        </div>
      </div>
      <div className="mb-px flex h-[21px] shrink-0 bg-[#cecece]">
        <ScrollBtn dir="left" />
        <div className="flex-[828] border border-[#bbb] bg-[#fdfdfd]" />
        <div className="flex-[474]" />
        <ScrollBtn dir="right" />
        <div className="w-5" />
      </div>
    </main>
  );
}

/* ---------- Portals panel ---------- */

const portals: { t: string; items: string[] }[] = [
  { t: "My Workspaces", items: [] },
  { t: "Core", items: ["Basic Diagramming", "Browse", "Clear", "Collaborate", "Core Modeling", "Default", "Explore", "Master", "Wide View"] },
  { t: "Design", items: ["Database modeling", "Gap Analysis", "Requirements", "Schema Design", "Trace by Matrix", "Use Case modeling"] },
  { t: "Software", items: ["Code Editing", "Debug", "Profile", "Record", "Software Engineering"] },
];

function PortalsPanel() {
  return (
    <aside className="flex w-[298px] shrink-0 flex-col bg-[#e5e5e5] text-[13px] text-[#444]">
      <h2 className="h-12 shrink-0 pl-[5px] text-[21px] leading-[52px]">Portals</h2>
      <div className="relative flex h-[30px] shrink-0 items-center">
        <select aria-label="Portal" className="h-full w-full appearance-none border border-[#999] bg-[#fdfdfd] pl-[29px]">
          <option>Workspaces</option>
        </select>
        <svg width="16" height="11" viewBox="0 0 16 11" className="absolute left-2" aria-hidden="true"><path d="M0 1h16M0 5.500h16M0 10h16" stroke="#444" strokeWidth="2" /></svg>
        <span className="absolute right-2 top-[13px]"><Tri dir="down" w={11} h={6} color="#666" /></span>
      </div>
      <div className="mr-px min-h-0 flex-1 overflow-hidden bg-[#fdfdfd] pt-[2px]">
        {portals.map((p) => (
          <section key={p.t}>
            <h3 className="flex h-8 items-center bg-[#f0f0f0] text-[13px] font-bold leading-8">
              <span className="w-[28px] pl-[8px]">
                {p.items.length ? (
                  <svg width="8" height="8" viewBox="0 0 8 8"><path d="M8 0v8H0z" fill="#aaa" /></svg>
                ) : (
                  <svg width="7" height="11" viewBox="0 0 7 11"><path d="M.5.5v10l5-5z" fill="none" stroke="#aaa" /></svg>
                )}
              </span>
              {p.t}
            </h3>
            {p.items.length > 0 && (
              <ul className="pl-[35px] pt-[3px]">
                {p.items.map((i) => (
                  <li key={i} className="h-7 leading-[29px]"><a href="#portal">{i}</a></li>
                ))}
              </ul>
            )}
          </section>
        ))}
      </div>
      <button aria-label="More" className="mb-[2px] flex h-[14px] shrink-0 items-center justify-center border border-[#c0c0c0]">
        <Tri dir="down" w={7} h={4} color="#555" />
      </button>
    </aside>
  );
}

/* ---------- Status bar ---------- */

function StatusBar() {
  return (
    <footer className="flex h-[30px] shrink-0 items-center whitespace-pre border-t border-[#c8c8c8] bg-[#f0f0f0] text-[13px] text-[#444]">
      <span className="w-[164px] pl-[2px]">Class Diagram:Providers:</span>
      <span className="w-[210px]">created: 28/05/2021 9:40:13 AM</span>
      <span className="w-[223px]">modified: 28/05/2021 9:41:40 AM</span>
      <span className="w-[46px]">100%</span>
      <span className="flex-1">850 x 1098</span>
      <span className="w-[124px]">All Perspectives</span>
      <span className="h-[15px] w-px bg-[#ccc]" />
      <button aria-label="Zoom out" className="ml-7 mr-3"><span className="block h-[2px] w-[10px] bg-[#aaa]" /></button>
      <input
        type="range"
        aria-label="Zoom"
        defaultValue={10}
        className="h-[22px] w-[84px] appearance-none bg-[linear-gradient(#aaa,#aaa)] bg-[length:100%_1px] bg-center bg-no-repeat [&::-webkit-slider-thumb]:h-[22px] [&::-webkit-slider-thumb]:w-[6px] [&::-webkit-slider-thumb]:appearance-none [&::-webkit-slider-thumb]:border [&::-webkit-slider-thumb]:border-[#999] [&::-webkit-slider-thumb]:bg-[#e8e8e8]"
      />
      <button aria-label="Zoom in" className="ml-[14px] mr-4">
        <svg width="10" height="10" viewBox="0 0 10 10"><path d="M0 5h10M5 0v10" stroke="#aaa" strokeWidth="2" /></svg>
      </button>
      <span className="w-[45px] text-[#aaa]">CAP</span>
      <span className="w-[53px]">NUM</span>
      <span className="w-[51px] text-[#aaa]">SCRL</span>
      <span className="w-[60px] text-[#aaa]">CLOUD</span>
    </footer>
  );
}

/* ---------- Taskbar ---------- */

const cmd = (
  <g>
    <rect x="2" y="4" width="27" height="23" fill="#000" stroke="#999" strokeWidth="1.500" />
    <path d="M3 5h25v5L3 14z" fill="#444" />
    <path d="M5 9h3M10 8v3M12 8v3M14 11h4" stroke="#ddd" />
  </g>
);
const apps: { n: string; on?: boolean; g: React.ReactNode }[] = [
  {
    n: "File Explorer",
    on: true,
    g: (
      <g>
        <path d="M2 4h11l2 3h13v20H2z" fill="#f0c24b" />
        <path d="M2 8h27v19H2z" fill="#ffe08a" />
        <path d="M6 28V18q0-2 2-2h15q2 0 2 2v10h-5v-6h-9v6z" fill="#3fb1e6" />
      </g>
    ),
  },
  {
    n: "Edge",
    g: (
      <g>
        <circle cx="15.500" cy="15" r="15" fill="#0c63b8" />
        <path d="M1 12C3 0 17-3 25 4c6 5 7 12 3 15-4 3-10 1-10-1 0-2 2-2 2-5 0-4-5-6-9-6-5 0-9 3-10 5z" fill="#3fcf9a" />
        <path d="M1 12C3 3 12-1 19 1c-6 1-10 4-8 6-5 0-9 3-10 5z" fill="#35a8e0" />
        <path d="M11 9c-5 3-5 18 9 20 4 0 7-3 9-6-6 3-13 1-14-4-1-3 1-6 3-8-2-3-5-3-7-2z" fill="#12407f" />
        <path d="M31 19c-4 4-12 3-13-1 4 3 11 2 13-3z" fill="#1d0b20" />
      </g>
    ),
  },
  {
    n: "Chrome",
    on: true,
    g: (
      <g>
        <circle cx="15.500" cy="15" r="14" fill="#f9cf3c" />
        <path d="M15.500 15L3.400 8A14 14 0 0 1 27.600 8z" fill="#e2483d" />
        <path d="M15.500 15L3.400 8A14 14 0 0 0 14 29z" fill="#31a350" />
        <circle cx="15.500" cy="15" r="6.800" fill="#fff" />
        <circle cx="15.500" cy="15" r="5.200" fill="#4285f4" />
      </g>
    ),
  },
  {
    n: "Store",
    g: (
      <g>
        <path d="M9 9V1.500h13V9" fill="none" stroke="#ddd" strokeWidth="2" />
        <path d="M1 8h29v22H1z" fill="#f4f4f4" />
        <path d="M10 14h5v5h-5z" fill="#f1511b" />
        <path d="M16 14h5v5h-5z" fill="#80cc28" />
        <path d="M10 20h5v5h-5z" fill="#00adef" />
        <path d="M16 20h5v5h-5z" fill="#fbbc09" />
      </g>
    ),
  },
  {
    n: "Gift",
    g: (
      <g>
        <path d="M0 0h31v30H0z" fill="#fff" />
        <path d="M15 9C10 9 7 7 8 5s6-1 7 4c1-5 6-6 7-4s-2 4-7 4z" fill="none" stroke="#cb1c24" strokeWidth="2.500" />
        <path d="M5 10h9v6H5zM17 10h9v6h-9z" fill="#d4141c" />
        <path d="M6 17h8v10H6zM17 17h8v10h-8z" fill="#a30d14" />
      </g>
    ),
  },
  {
    n: "IntelliJ IDEA",
    g: (
      <g>
        <path d="M3 3h14l11 8v16H3z" fill="#e23b5e" />
        <path d="M3 3h8L3 18z" fill="#f88a2a" />
        <path d="M14 3h14v17L14 27z" fill="#2c70e0" />
        <rect x="6" y="6" width="19" height="18" fill="#000" />
        <path d="M8 9h4M10 9v6M8 15h4M15 9h4v5q0 1.500-3 1M8 21h8" stroke="#fff" strokeWidth="1.500" fill="none" />
      </g>
    ),
  },
  {
    n: "Visual Studio",
    g: (
      <g>
        <path d="M22 1l8 3v22l-8 3z" fill="#b18af0" />
        <path d="M22 1v9L4 24l-3-2z" fill="#7b48c9" />
        <path d="M22 29v-9L4 6 1 8z" fill="#9263dd" />
        <path d="M1 8l3-2v18l-3-2z" fill="#6a35b0" />
      </g>
    ),
  },
  {
    n: "Android Studio",
    g: (
      <g>
        <circle cx="15.500" cy="14" r="12" fill="#3ddc84" />
        <circle cx="15.500" cy="10" r="4" fill="#15394a" />
        <circle cx="15.500" cy="10" r="1.500" fill="#3ddc84" />
        <path d="M13 14L6 27M18 14l7 13M9 21q6 4 13 0" stroke="#dfe7ea" strokeWidth="2.500" fill="none" />
      </g>
    ),
  },
  {
    n: "Sticky Notes",
    g: (
      <g>
        <path d="M2 2h27v26H2z" fill="#fcd202" />
        <path d="M16 16h13L16 28z" fill="#46484a" />
        <path d="M29 16v12H16z" fill="#e0a800" />
      </g>
    ),
  },
  { n: "Command Prompt", g: cmd },
  {
    n: "Neural",
    g: (
      <g>
        <path d="M15 0l3 2 4-2 3 4 4 1-1 5 3 3-3 4-1 4-5-1-3 2-3-3-4 4-1 7-3-1-1-8-5-3 1-5-3-3 3-3 1-5 4-1 3-2z" fill="#8d9095" />
        <path d="M8 4l7 9M24 4l-8 9M3 12l11 2M27 12l-11 3M15 2v12" stroke="#25182c" strokeWidth="1.200" />
        {[[9, 9], [15, 9], [21, 8], [11, 16], [20, 15], [25, 13], [5, 13]].map(([x, y], i) => (
          <circle key={i} cx={x} cy={y} r="1.600" fill="#24b5f2" stroke="#222" strokeWidth=".6" />
        ))}
      </g>
    ),
  },
  {
    n: "MongoDB",
    g: (
      <g>
        <circle cx="15.500" cy="15" r="15" fill="#fff" />
        <path d="M15.500 4c7 7 6 14 0 20-6-6-7-13 0-20z" fill="#13aa52" />
        <path d="M15.500 4c7 7 6 14 0 20z" fill="#0d8a40" />
        <path d="M15.500 20v7" stroke="#888" />
      </g>
    ),
  },
  {
    n: "Slack",
    g: (
      <g>
        <circle cx="15.500" cy="15" r="14.500" fill="#fff" />
        <g strokeWidth="4" strokeLinecap="round">
          <path d="M13 7v5M7 12h5" stroke="#36c5f0" />
          <path d="M18.500 6v6M18.500 12h6" stroke="#2eb67d" />
          <path d="M18.500 18v6M18.500 18h6" stroke="#ecb22e" />
          <path d="M12.500 18v6M7 18h5" stroke="#e01e5a" />
        </g>
      </g>
    ),
  },
  {
    n: "Sublime Text",
    g: (
      <g>
        <rect x="0" y="0" width="31" height="30" rx="2" fill="#474747" />
        <path d="M23 5L8 10v6l15-5zM8 11v5l15 4v-5zM23 15L8 20v6l15-5z" fill="#ff9800" />
      </g>
    ),
  },
  {
    n: "Visual Studio Code",
    on: true,
    g: (
      <g>
        <path d="M22 0l8 3v24l-8 3z" fill="#2f9fe8" />
        <path d="M22 0v9L4 23l-3-2z" fill="#0d71bd" />
        <path d="M22 30v-9L4 7 1 9z" fill="#1788d4" />
      </g>
    ),
  },
  {
    n: "Postman",
    g: (
      <g>
        <circle cx="15.500" cy="15" r="14" fill="#ff6c37" stroke="#ffd9c8" strokeWidth="2" />
        <path d="M8 23L20 8" stroke="#fff" strokeWidth="2.500" />
        <circle cx="21.500" cy="8" r="3" fill="#fff" />
        <path d="M10 18l8-7 2 3-6 6z" fill="#ffe6da" />
      </g>
    ),
  },
  { n: "Command Prompt 2", on: true, g: cmd },
  {
    n: "Telegram",
    on: true,
    g: (
      <g>
        <circle cx="15.500" cy="15" r="15" fill="#2a9fd9" />
        <path d="M5 16L24 7l-3 16-6-4-3 3v-6z" fill="#fff" />
        <path d="M12 16l10-8-8 10-2 4z" fill="#c3dced" />
      </g>
    ),
  },
];

function Taskbar() {
  return (
    <nav className="flex h-[50px] shrink-0 items-stretch bg-[linear-gradient(90deg,#1b0a1e_0%,#1d0b20_35%,#26112a_46%,#200812_56%,#1c0608_66%,#200508_82%,#2a0c08_100%)] text-white">
      <button aria-label="Start" className="flex w-[60px] items-center justify-center">
        <svg width="20" height="20" viewBox="0 0 20 20"><path d="M0 3l8.500-1.500v8H0zM9.500 1.300L20 0v9.500H9.500zM0 10.500h8.500v8L0 17zM9.500 10.500H20V20L9.500 18.700z" fill="#fff" /></svg>
      </button>
      <button aria-label="Search" className="flex w-[60px] items-center justify-center">
        <svg width="20" height="20" viewBox="0 0 20 20"><circle cx="12.500" cy="7.500" r="6.500" fill="none" stroke="#fff" strokeWidth="1.500" /><path d="M8 12l-8 8" stroke="#fff" strokeWidth="1.500" /></svg>
      </button>
      <button aria-label="Task view" className="mr-px flex w-[62px] items-center justify-center">
        <svg width="21" height="20" viewBox="0 0 21 20"><path d="M1 0v3.500h12V0M1 20v-3.500h12V20M1 6.500h12v7H1zM18.500 0v5M18.500 11v9" fill="none" stroke="#fff" strokeWidth="1.300" /><path d="M17 6.500h3v3h-3z" fill="#fff" /></svg>
      </button>
      {apps.map((a) => (
        <button key={a.n} aria-label={a.n} className="relative flex w-[62px] shrink-0 items-center justify-center">
          <svg width="31" height="30" viewBox="0 0 31 30" aria-hidden="true">{a.g}</svg>
          {a.n === "Telegram" && (
            <span className="absolute bottom-[8px] right-[13px] rounded-sm bg-[#e9403c] px-[2px] text-[10px] leading-[13px]">..53</span>
          )}
          {a.on && <span className="absolute inset-x-[5px] bottom-0 h-[3px] bg-[#77b4e8]" />}
        </button>
      ))}
      <button aria-label="Enterprise Architect" className="flex w-[62px] shrink-0 items-center justify-center border-b-[3px] border-[#77b4e8] bg-[#483838]">
        <EaLogo size={32} color="#1c10f0" bg="#fff" />
      </button>
      <div className="flex flex-1 items-center justify-end">
        <button aria-label="Hidden icons" className="mr-[12px]">
          <svg width="16" height="9" viewBox="0 0 16 9"><path d="M1 8l7-7 7 7" fill="none" stroke="#fff" strokeWidth="1.500" /></svg>
        </button>
        <svg width="20" height="15" viewBox="0 0 20 15" className="mr-[12px]" aria-label="Battery">
          <path d="M4 4.500h14v9H5M19 7v4" fill="none" stroke="#fff" strokeWidth="1.500" />
          <path d="M8 6.500h8v5H8z" fill="#fff" />
          <path d="M0 3h5v3q0 2-2.500 2T0 6zM1 0v3M4 0v3M2.500 8v6" fill="#fff" stroke="#fff" />
        </svg>
        <svg width="17" height="16" viewBox="0 0 17 16" className="mr-[10px]" aria-label="Network">
          <path d="M1 15C1 7 7 1 16 1M5 15c0-6 4-10 11-10M9 15c0-4 3-6 7-6" fill="none" stroke="#bbb" strokeWidth="1.300" />
          <circle cx="14" cy="14" r="2" fill="#fff" />
        </svg>
        <svg width="21" height="16" viewBox="0 0 21 16" className="mr-[12px]" aria-label="Volume">
          <path d="M1 5.500h3l4-4v13l-4-4H1z" fill="none" stroke="#fff" strokeWidth="1.300" />
          <path d="M11 5q2 3 0 6M14 3q3 5 0 10" fill="none" stroke="#fff" strokeWidth="1.300" />
          <path d="M17 1q4 7 0 14" fill="none" stroke="#888" strokeWidth="1.300" />
        </svg>
        <div className="w-[30px] text-center text-[14px] leading-[22px]">ENG<br />IN</div>
        <div className="ml-3 w-[84px] text-center text-[14px] leading-[22px]">10:19 AM<br />28/05/2021</div>
        <button aria-label="Notifications" className="ml-[18px] mr-[24px]">
          <svg width="21" height="21" viewBox="0 0 21 21"><path d="M1 1h19v15h-7l-2.500 3L8 16H1z" fill="none" stroke="#fff" strokeWidth="1.300" /></svg>
        </button>
        <div className="mr-[5px] h-full w-px bg-[#6a5050]" />
      </div>
    </nav>
  );
}

export default function App() {
  return (
    <div className={`${UI} flex h-screen flex-col overflow-hidden bg-[#e5e5e5]`}>
      <TitleBar />
      <Ribbon />
      <AddressBar />
      <div className="flex min-h-0 flex-1">
        <BrowserPanel />
        <div className="w-[4px] shrink-0 bg-[#e2e2e2]" />
        <DiagramPanel />
        <div className="w-[8px] shrink-0 bg-[#dedede]" />
        <PortalsPanel />
      </div>
      <StatusBar />
      <Taskbar />
    </div>
  );
}
